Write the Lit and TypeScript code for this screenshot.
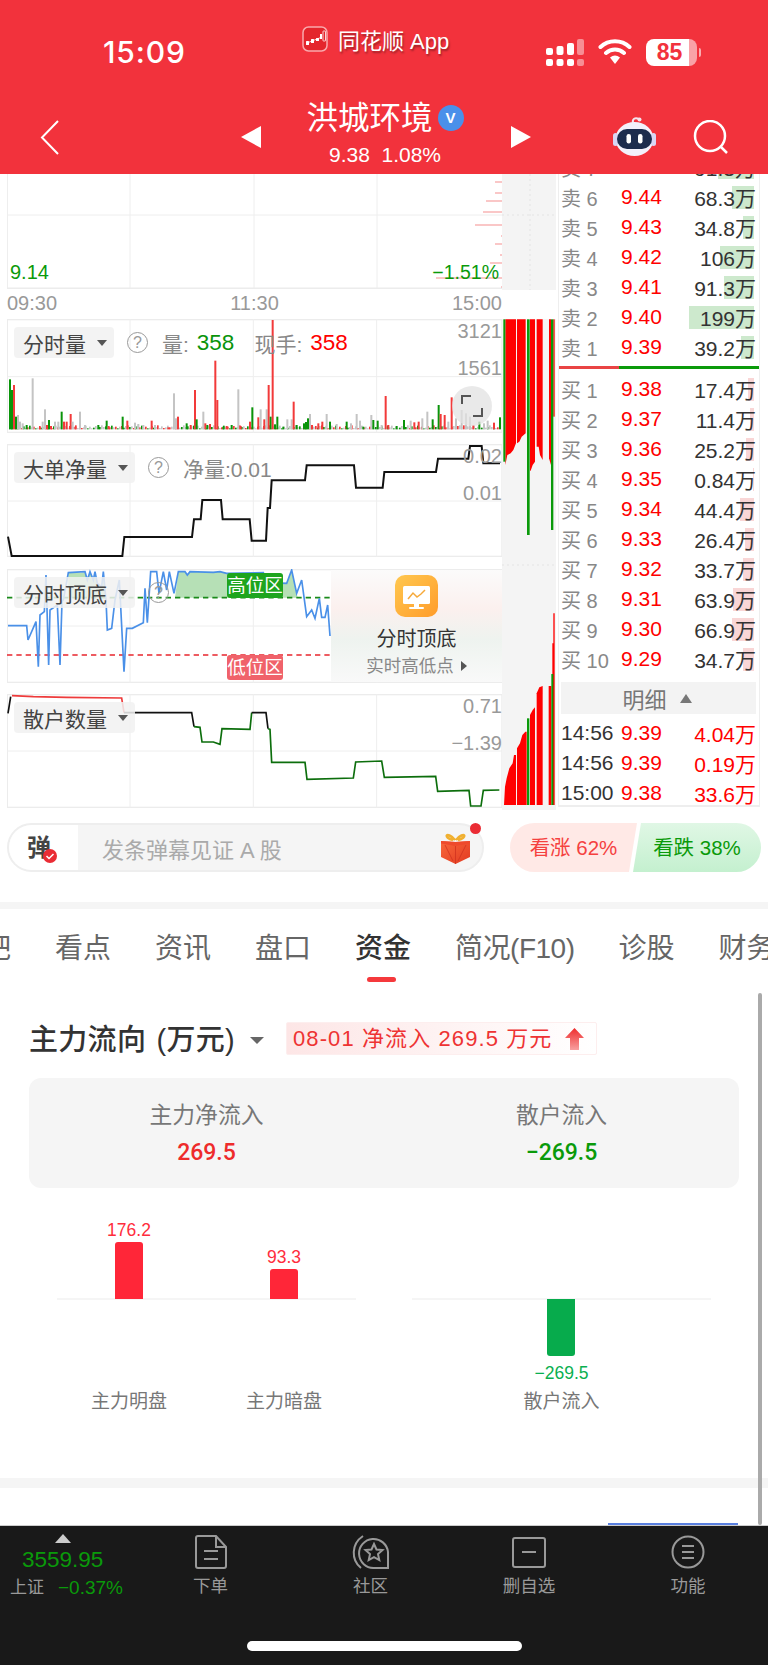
import { LitElement, html, css, svg } from "lit";
import { customElement } from "lit/decorators.js";

type Bar = [number, number, string];
const r = "#f23a3a", g = "#0a940a", y = "#c4c4c4";
const volBars: Bar[] = [
  [30,268,g],[36,300,g],[42,285,r],[48,380,g],[54,375,y],[60,395,y],[68,400,y],[80,405,g],[98,265,y],[120,412,r],[128,395,y],[135,358,y],[141,405,r],[147,390,g],[153,408,r],[165,395,y],[175,395,y],[185,365,g],[192,395,r],[200,395,r],[212,372,r],[218,395,y],[226,410,r],[240,365,y],[255,405,y],[295,405,g],[320,392,g],[326,408,r],[368,380,g],[382,392,r],[405,398,y],[415,402,y],[430,405,y],[455,392,r],[465,405,y],[505,412,r],[522,310,y],[528,385,y],[534,380,r],[560,400,g],[572,405,r],[585,300,r],[590,388,g],[610,365,y],[616,400,r],[622,405,g],[630,402,r],[646,212,r],[652,330,r],[670,410,g],[680,408,r],[695,405,g],[715,298,y],[722,408,r],[750,395,r],[757,352,g],[775,382,r],[782,358,y],[793,388,r],[800,358,y],[806,285,r],[812,380,g],[818,90,r],[825,403,g],[832,380,g],[850,410,g],[862,388,y],[875,388,y],[881,335,r],[890,405,g],[912,400,g],[918,396,g],[924,385,g],[930,372,y],[936,405,r],[955,400,r],[967,395,r],[980,372,y],[990,395,g],[1010,402,y],[1040,395,g],[1053,400,y],[1070,372,y],[1080,392,y],[1090,410,g],[1114,375,y],[1120,390,g],[1133,392,g],[1145,405,y],[1157,318,r],[1165,405,r],[1190,408,g],[1212,390,g],[1232,392,y],[1243,397,r],[1256,395,r],[1267,385,y],[1282,365,y],[1298,388,g],[1316,345,g],[1322,372,r],[1334,375,r],[1345,395,y],[1355,322,r],[1368,385,y],[1385,360,y],[1398,370,y],[1410,380,y],[1420,405,r],[1438,395,g],[1452,400,y],[1463,392,y],[1482,398,r],[1500,382,g],
];
const filler: Bar[] = Array.from({ length: 245 }, (_, i) => {
  const s = (i * 7919) % 97;
  return [27 + i * 6, 418 - (3 + (s % 10)), [y, r, g, y][s % 4]] as Bar;
});

const bigLine = "24,740 35,798 367,798 373,741 576,741 582,688 602,688 607,630 663,630 668,688 749,688 755,752 798,752 803,654 810,654 815,571 915,571 920,526 1062,526 1068,593 1148,593 1153,546 1308,546 1314,506 1405,506 1410,468 1445,468 1450,520 1500,520";
const blueLine = "24,197 80,197 84,240 108,185 115,320 120,165 133,155 138,45 146,315 150,150 172,135 180,315 186,125 190,120 205,38 255,35 262,60 270,35 280,60 285,35 292,70 305,80 310,35 318,120 322,210 335,205 345,120 358,60 372,335 380,205 397,205 430,188 435,85 442,188 452,35 470,35 477,100 490,35 500,90 508,35 522,100 535,35 555,35 562,45 570,35 640,37 660,35 680,40 790,38 795,68 860,70 875,30 890,100 905,60 920,170 935,150 945,175 958,115 965,172 975,172 983,135 990,228";

const asks = [["卖 6","9.44","68.3万",22],["卖 5","9.43","34.8万",11],["卖 4","9.42","106万",34],["卖 3","9.41","91.3万",30],["卖 2","9.40","199万",65],["卖 1","9.39","39.2万",13]] as const;
const bids = [["买 1","9.38","17.4万",6],["买 2","9.37","11.4万",4],["买 3","9.36","25.2万",8],["买 4","9.35","0.84万",1],["买 5","9.34","44.4万",14],["买 6","9.33","26.4万",9],["买 7","9.32","33.7万",11],["买 8","9.31","63.9万",21],["买 9","9.30","66.9万",22],["买 10","9.29","34.7万",11]] as const;
const trades = [["14:56","9.39","4.04万"],["14:56","9.39","0.19万"],["15:00","9.38","33.6万"]];

const gridLines = (top: number, bottom: number, mid: number) => svg`
  <rect x="22" y=${top + 2} width="1484" height=${bottom - top - 4} fill="none" stroke="#ececec" stroke-width="4"/>
  <line x1="21" x2="1506" y1=${mid} y2=${mid} stroke="#eeeeee" stroke-width="3"/>
  ${[390, 760, 1130].map((x) => svg`<line x1=${x} x2=${x} y1=${top} y2=${bottom} stroke="#eeeeee" stroke-width="3"/>`)}`;

@customElement("app-root")
export class AppRoot extends LitElement {
  static styles = css`
    :host { display: block; width: 768px; height: 1665px; overflow: hidden; position: relative; background: #fff; font-family: "Liberation Sans","Noto Sans CJK SC",sans-serif; color: #333; }
    svg { display: block; flex: none; }
    .hdr { background: #f2323c; height: 174px; color: #fff; position: relative; z-index: 2; }
    .status { height: 100px; display: flex; align-items: center; padding-left: 103px; }
    .time { font: 500 30px Inter, sans-serif; width: 84px; margin-top: 4px; letter-spacing: .9px; white-space: nowrap; }
    .brand { display: flex; align-items: center; margin-left: 115px; width: 244px; margin-bottom: 22px; }
    .brand span { font-size: 22px; margin-left: 10px; text-shadow: 1px 2px 2px rgba(0,0,0,.35); white-space: nowrap; }
    .sig { margin-top: 4px; }
    .wifi { margin-left: 14px; margin-top: 3px; }
    .batt { margin-left: 14px; margin-top: 4px; width: 55px; height: 27px; position: relative; display: flex; }
    .batt b { width: 43px; height: 27px; background: #fff; border-radius: 8px 0 0 8px; color: #f2323c; font: 700 23px "Liberation Sans", sans-serif; line-height: 27px; text-align: center; padding-left: 4px; box-sizing: border-box; }
    .batt i { width: 8px; height: 27px; background: rgba(255,255,255,.55); border-radius: 0 8px 8px 0; }
    .batt u { width: 2px; height: 9px; margin: 9px 0 0 2px; background: rgba(255,255,255,.6); border-radius: 0 2px 2px 0; }
    .nav { height: 74px; display: flex; align-items: center; padding-left: 40px; }
    .triL { margin-left: 182px; }
    .mid { width: 230px; margin-left: 9px; display: flex; flex-direction: column; align-items: center; margin-top: -6px; }
    .name { display: flex; align-items: center; gap: 5px; font-size: 31.5px; line-height: 36px; }
    .vb { width: 26px; height: 26px; border-radius: 50%; background: #4a90ea; color: #fff; font-size: 15px; font-weight: 700; line-height: 26px; text-align: center; }
    .sub { font-size: 21px; line-height: 26px; margin-top: 6px; white-space: pre; }
    .triR { margin-left: 11px; }
    .robot { margin-left: 82px; margin-top: -2px; }
    .search { margin-left: 37px; }

    .main { height: 636px; display: flex; overflow: hidden; }
    .left { width: 495px; margin-left: 7px; flex: none; }
    .panel { position: relative; height: 114px; margin-bottom: 11px; }
    .panel > svg { position: absolute; inset: 0; }
    .p0 { height: 115px; margin: 0; }
    .p2 { height: 113px; margin-bottom: 12px; }
    .last { margin-bottom: 0; }
    .val { position: absolute; top: 88px; font-size: 20px; line-height: 20px; color: #0a9a0a; }
    .v1 { left: 3px; }
    .v2 { right: 3px; font-size: 19.5px; }
    .times { height: 30px; display: flex; justify-content: space-between; font-size: 20px; line-height: 28px; color: #999; }
    .ov { position: absolute; left: 7px; top: 8px; display: flex; align-items: center; height: 31px; font-size: 21px; color: #888; white-space: nowrap; }
    .pill { height: 31px; display: flex; align-items: center; gap: 11px; padding: 0 7px 0 9px; background: rgba(241,241,241,.85); border-radius: 4px; color: #444; }
    .tri { width: 0; height: 0; border-left: 5.5px solid transparent; border-right: 5.5px solid transparent; border-top: 6.5px solid #555; }
    .q { width: 19px; height: 19px; border: 1.5px solid #999; border-radius: 50%; font-size: 16px; line-height: 19px; text-align: center; color: #999; margin: 0 14px 0 13px; }
    .num { font-size: 22.5px; margin-left: 8px; }
    .grn { color: #0a940a; }
    .red { color: #f00; }
    .hand { margin-left: 20px; }
    .rl { position: absolute; right: 0; font-size: 20px; line-height: 20px; color: #999; }
    .rl1 { top: 1.5px; }
    .rl2 { top: 38.5px; }
    .full { position: absolute; left: 445px; top: 67px; width: 40px; height: 40px; border-radius: 50%; background: rgba(225,225,225,.75); display: flex; align-items: center; justify-content: center; }
    .zone { position: absolute; left: 220px; width: 56px; height: 25px; border-radius: 3px; color: #fff; font-size: 18.5px; line-height: 25px; text-align: center; }
    .hi { top: 4px; background: #1ea51e; }
    .lo { top: 86px; background: #f0626a; }
    .promo { position: absolute; right: 0; top: 1px; width: 171px; height: 112px; background: linear-gradient(#fbfbfb 0, #fbf0ee 35%, #eef3ef 62%, #f9f9f9 100%); display: flex; flex-direction: column; align-items: center; }
    .picon { margin-top: 5px; }
    .pt { font-size: 20px; line-height: 24px; margin-top: 10px; color: #333; }
    .ps { font-size: 17.5px; line-height: 22px; margin-top: 4px; color: #888; display: flex; align-items: center; gap: 7px; }
    .ps i { width: 0; height: 0; border-top: 5px solid transparent; border-bottom: 5px solid transparent; border-left: 6px solid #555; }

    .col { width: 54px; flex: none; background: #f4f4f4; }
    .ob { width: 202px; margin-left: 2px; flex: none; border-left: 1px solid #eee; border-right: 1px solid #eee; box-sizing: border-box; height: 633px; border-bottom: 2px solid #eee; overflow: hidden; }
    .book { margin-top: -22px; padding: 0 3px 0 2px; }
    .row { height: 30px; display: grid; grid-template-columns: 60px 60px 1fr; align-items: center; position: relative; font-size: 21px; }
    .row .l { font-size: 20px; color: #888; white-space: pre; }
    .row .p { color: #f00; }
    .row .v { text-align: right; color: #333; position: relative; }
    .fill { position: absolute; right: 2px; top: 3.5px; height: 23px; }
    .gf { background: #cde9cd; }
    .rf { background: #f9d6d6; }
    .sep { height: 3px; margin: 4px -3px 5px -2px; background: linear-gradient(90deg, #e94444 60px, #0a9a0a 60px); }
    .more { height: 32px; margin: 8px 0 4px; background: #f3f3f3; display: flex; align-items: center; justify-content: center; gap: 13px; font-size: 22px; color: #777; padding-right: 3px; }
    .more i { width: 0; height: 0; border-left: 6.5px solid transparent; border-right: 6.5px solid transparent; border-bottom: 9px solid #777; }
    .row .t { color: #333; }
    .row .rv { color: #f00; text-align: right; }

    .cm { display: flex; margin: 13px 0 30px 7px; height: 49px; }
    .inp { width: 477px; height: 49px; box-sizing: border-box; border: 2px solid #eee; border-radius: 25px; background: #f5f5f5; position: relative; display: flex; align-items: center; font-size: 22px; color: #aaa; }
    .dan { width: 69px; height: 45px; background: #fff; border-radius: 23px 0 0 23px; margin-right: 24px; font-size: 24px; font-weight: 700; color: #444; line-height: 45px; padding-left: 18px; box-sizing: border-box; position: relative; }
    .chk { position: absolute; left: 34px; top: 24px; }
    .gift { position: absolute; left: 431px; top: 8px; }
    .dot { position: absolute; left: 461px; top: -2px; width: 11px; height: 11px; border-radius: 50%; background: #ea2c34; }
    .vote { display: flex; margin-left: 26px; font-size: 20.5px; line-height: 49px; text-align: center; }
    .up { width: 127px; background: #ffe9e6; color: #f5413f; border-radius: 25px 0 0 25px; clip-path: polygon(0 0, 100% 0, 93.7% 100%, 0 100%); }
    .down { width: 128px; margin-left: -4px; background: linear-gradient(#e0f7e5, #c4f0cf); color: #0a9a0a; border-radius: 0 25px 25px 0; clip-path: polygon(6.25% 0, 100% 0, 100% 100%, 0 100%); }
    .band { height: 7px; background: #f5f5f5; }
    .tabs { display: flex; gap: 44px; margin: 20px 0 0 -17px; height: 56px; font-size: 28px; line-height: 40px; color: #666; white-space: nowrap; overflow: visible; }
    .tabs b { position: relative; color: #333; font-weight: 500; }
    .tabs b::after { content: ""; position: absolute; left: 12px; top: 48px; width: 29px; height: 5px; border-radius: 3px; background: #f5393c; }
    .tight { letter-spacing: -.5px; }
    .sec { margin-top: 35px; padding-left: 29px; }
    .ttl { display: flex; align-items: center; height: 40px; }
    .ttl h2 { margin: 0; font-size: 29px; font-weight: 500; line-height: 40px; color: #333; white-space: nowrap; width: 221px; word-spacing: 2px; letter-spacing: .3px; }
    .tt { border-left: 7px solid transparent; border-right: 7px solid transparent; border-top: 7px solid #666; width: 0; height: 0; }
    .tag { margin-left: 22px; width: 311px; height: 33px; box-sizing: border-box; margin-top: -3px; border: 1px solid #fdeeee; border-radius: 2px; background: linear-gradient(90deg, #fde6e6, #fff); color: #ee3333; font-size: 22px; letter-spacing: 1.1px; line-height: 31px; padding-left: 6px; display: flex; align-items: center; gap: 13px; white-space: nowrap; }
    .card { margin-top: 18px; width: 710px; height: 110px; background: #f5f5f5; border-radius: 12px; display: grid; grid-template-columns: 1fr 1fr; text-align: center; }
    .card div { padding-top: 22px; font-size: 22.8px; line-height: 30px; color: #777; }
    .card p { margin: 8px 0 0; font: 500 23px/30px Roboto, sans-serif; }
    .card .a { color: #ee2b2b; }
    .card .b { color: #0a9a0a; }
    .flow { display: flex; gap: 56px; margin: 21px 0 0 28px; }
    .grp { width: 299px; display: flex; gap: 11px; position: relative; }
    .grp::before { content: ""; position: absolute; left: 0; right: 0; top: 89px; height: 2px; background: #f5f5f5; }
    .it { flex: 1; position: relative; display: flex; flex-direction: column; align-items: center; }
    .ua { height: 90px; display: flex; flex-direction: column; justify-content: flex-end; align-items: center; }
    .da { height: 91px; display: flex; flex-direction: column; align-items: center; }
    .bar { width: 28px; }
    .bu { background: #ff2638; border-radius: 3px 3px 0 0; }
    .bd { background: #07ab4c; border-radius: 0 0 3px 3px; }
    .n { font-size: 17.5px; line-height: 20px; color: #ff2d3c; margin-bottom: 2px; }
    .ng { color: #0aaf50; margin: 7px 0 0; }
    .lb { font-size: 19px; line-height: 24px; color: #777; }
    .band2 { height: 10px; margin-top: 64px; background: #f5f5f5; }
    .blue { width: 130px; height: 2px; margin: 35px 0 0 608px; background: #5a80e0; }
    .foot { height: 140px; background: #191919; border-top: 1px solid #ccc; box-sizing: border-box; display: grid; grid-template-columns: 130px 161px 159px 158px 160px; position: relative; color: #999; }
    .idx { padding-left: 10px; }
    .idx i { display: block; width: 0; height: 0; margin: 8px 0 0 45px; border-left: 8px solid transparent; border-right: 8px solid transparent; border-bottom: 9px solid #ccc; }
    .idx p { margin: 4px 0 0 12px; font-size: 22.5px; line-height: 26px; color: #0a9a0a; }
    .idx div { display: flex; align-items: center; gap: 14px; font-size: 17px; line-height: 24px; margin-top: 3px; }
    .idx span { font-size: 19px; color: #0a9a0a; }
    .cell { display: flex; flex-direction: column; align-items: center; padding-top: 9px; font-size: 17.5px; line-height: 24px; gap: 5px; }
    .home { position: absolute; left: 247px; top: 115px; width: 275px; height: 10px; background: #fff; border-radius: 5px; }
    .scroll { position: absolute; left: 758px; top: 993px; width: 4px; height: 532px; background: #aaa; border-radius: 2px; }
  `;

  private help() { return html`<span class="q">?</span>`; }

  private header() {
    return html`<div class="hdr">
      <div class="status">
        <div class="time">15:09</div>
        <div class="brand">
          <svg width="26" height="26" viewBox="0 0 26 26"><rect x="1" y="1" width="24" height="24" rx="5.500" fill="#e4252c" stroke="#f9a9ac" stroke-width="1.500"/><path d="M5 17l5-2 5-2 5-2" fill="none" stroke="#fff" stroke-width=".8"/><rect x="4" y="15" width="3" height="4" rx=".5" fill="#fff"/><rect x="9" y="13" width="3" height="4" rx=".5" fill="#fff"/><rect x="14" y="12" width="3" height="3" rx=".5" fill="#fff"/><rect x="18" y="8" width="2" height="5" fill="#fff"/><rect x="21" y="5" width="2.500" height="10" rx=".5" fill="none" stroke="#fff" stroke-width=".8"/></svg>
          <span>同花顺 App</span>
        </div>
        <svg class="sig" width="38" height="27" viewBox="0 0 38 27"><g fill="#fff"><rect x="0" y="9" width="7" height="7" rx="2"/><rect x="10.500" y="7" width="7" height="9" rx="2"/><rect x="21" y="4" width="7" height="12" rx="2"/><rect x="0" y="20" width="7" height="7" rx="2"/><rect x="10.500" y="20" width="7" height="7" rx="2"/><rect x="21" y="20" width="7" height="7" rx="2"/></g><g fill="#fff" opacity=".45"><rect x="31" y="0" width="7" height="16" rx="2"/><rect x="31" y="20" width="7" height="7" rx="2"/></g></svg>
        <svg class="wifi" width="34" height="25" viewBox="0 0 34 25"><path d="M17 25l-5-6.500a8 8 0 0 1 10 0z" fill="#fff"/><path d="M8 14a13.500 13.500 0 0 1 18 0M2.500 8a21 21 0 0 1 29 0" fill="none" stroke="#fff" stroke-width="4" stroke-linecap="round"/></svg>
        <div class="batt"><b>85</b><i></i><u></u></div>
      </div>
      <div class="nav">
        <svg width="19" height="35" viewBox="0 0 19 35"><path d="M18 1L2 17.500 18 34" fill="none" stroke="#fff" stroke-width="2"/></svg>
        <svg class="triL" width="20" height="22" viewBox="0 0 20 22"><path d="M20 0v22L0 11z" fill="#fff"/></svg>
        <div class="mid">
          <div class="name"><span>洪城环境</span><span class="vb">V</span></div>
          <div class="sub">9.38  1.08%</div>
        </div>
        <svg class="triR" width="20" height="22" viewBox="0 0 20 22"><path d="M0 0v22l20-11z" fill="#fff"/></svg>
        <svg class="robot" width="43" height="40" viewBox="0 0 43 40"><path d="M20 7c-1-4 2-6 6-4" fill="none" stroke="#f4e4ee" stroke-width="2"/><circle cx="26.500" cy="3.500" r="2" fill="#f4e4ee"/><ellipse cx="21.500" cy="23" rx="19" ry="17" fill="#f3f1fb"/><rect x="0" y="17" width="5" height="13" rx="2.500" fill="#d9d6f4"/><rect x="38" y="17" width="5" height="13" rx="2.500" fill="#d9d6f4"/><rect x="4" y="13" width="35" height="20" rx="10" fill="#1d2c4d"/><rect x="13.500" y="18" width="4.500" height="9.500" rx="2.200" fill="#fff"/><rect x="25" y="18" width="4.500" height="9.500" rx="2.200" fill="#fff"/></svg>
        <svg class="search" width="35" height="34" viewBox="0 0 35 34"><circle cx="17" cy="16" r="15" fill="none" stroke="#fff" stroke-width="2.500"/><path d="M28 27l6 6" stroke="#fff" stroke-width="2.500"/></svg>
      </div>
    </div>`;
  }

  private charts() {
    const pink = [[495,182],[495,193],[486,201],[483,212],[475,225],[501,236],[495,244],[500,255],[490,263],[436,278],[501,287]];
    return html`<div class="left">
      <div class="panel p0">
        <svg width="495" height="115" viewBox="7 174 495 115">
          <g stroke="#eee" stroke-width="1"><line x1="130" x2="130" y1="174" y2="289"/><line x1="254" x2="254" y1="174" y2="289"/><line x1="377" x2="377" y1="174" y2="289"/><line x1="7" x2="502" y1="215" y2="215"/><line x1="7.500" x2="7.500" y1="174" y2="289"/></g>
          <rect x="7" y="287.500" width="495" height="2" fill="#ececec"/>
          ${pink.map(([x, yy]) => svg`<line x1=${x} x2="502" y1=${yy} y2=${yy} stroke="#f9b4b4" stroke-width="1.500"/>`)}
        </svg>
        <span class="val v1">9.14</span><span class="val v2">−1.51%</span>
      </div>
      <div class="times"><span>09:30</span><span>11:30</span><span>15:00</span></div>

      <div class="panel">
        <svg width="495" height="114" viewBox="21 87 1485 342">
          ${gridLines(87, 429, 260)}
          ${filler.map(([x, t, c]) => svg`<rect x=${x} y=${t} width="5" height=${418 - t} fill=${c}/>`)}
          ${volBars.map(([x, t, c]) => svg`<rect x=${x - 3} y=${t} width="6" height=${418 - t} fill=${c}/>`)}
        </svg>
        <div class="ov"><div class="pill">分时量<i class="tri"></i></div>${this.help()}<span>量:</span><span class="num grn">358</span><span class="hand">现手:</span><span class="num red">358</span></div>
        <span class="rl rl1">3121</span><span class="rl rl2">1561</span>
        <div class="full"><svg width="22" height="22" viewBox="0 0 22 22"><path d="M1 9V1h9M21 13v8h-9" fill="none" stroke="#555" stroke-width="2"/></svg></div>
      </div>

      <div class="panel p2">
        <svg width="495" height="113" viewBox="21 462 1485 339">
          ${gridLines(462, 801, 633)}
          <polyline points=${bigLine} fill="none" stroke="#111" stroke-width="6"/>
        </svg>
        <div class="ov"><div class="pill">大单净量<i class="tri"></i></div>${this.help()}<span>净量:0.01</span></div>
        <span class="rl rl1">0.02</span><span class="rl rl2">0.01</span>
      </div>

      <div class="panel">
        <svg width="495" height="114" viewBox="21 27 1485 342">
          ${gridLines(27, 369, 198)}
          <path d="M205 113V38H255L262 60 270 35 280 60 285 35 292 70 305 80 310 35 318 113zM525 113L535 35H555L562 45 570 35H640L660 35 680 40H790L795 68H860L875 30 890 100 893 113z" fill="#b6e0b6"/>
          <line x1="21" x2="993" y1="113" y2="113" stroke="#1a8a1a" stroke-width="5" stroke-dasharray="16 12"/>
          <line x1="21" x2="993" y1="285" y2="285" stroke="#e8262e" stroke-width="5" stroke-dasharray="16 12"/>
          <polyline points=${blueLine} fill="none" stroke="#4a90e8" stroke-width="5"/>
        </svg>
        <div class="zone hi">高位区</div><div class="zone lo">低位区</div>
        <div class="ov"><div class="pill">分时顶底<i class="tri"></i></div>${this.help()}</div>
        <div class="promo">
          <svg class="picon" width="43" height="42" viewBox="0 0 43 42"><defs><linearGradient id="po" x1="0" y1="0" x2="1" y2="1"><stop offset="0" stop-color="#ffc850"/><stop offset="1" stop-color="#ff9c2a"/></linearGradient></defs><rect width="43" height="42" rx="10" fill="url(#po)"/><rect x="8" y="11" width="27" height="18" rx="1.500" fill="#fff"/><path d="M13 24l5-6 4 4 4-3 4-4" fill="none" stroke="#f6a93a" stroke-width="1.500"/><rect x="19" y="29" width="5" height="3" fill="#fff"/><rect x="14" y="32" width="15" height="2" rx="1" fill="#fff"/></svg>
          <div class="pt">分时顶底</div>
          <div class="ps">实时高低点<i></i></div>
        </div>
      </div>

      <div class="panel last">
        <svg width="495" height="114" viewBox="21 402 1485 342">
          ${gridLines(402, 744, 573)}
          <polyline points="24,460 32,410" fill="none" stroke="#111" stroke-width="5"/>
          <polyline points="36,407 100,410 200,412 365,414 372,458" fill="none" stroke="#ee3b3b" stroke-width="5"/>
          <polyline points="372,458 575,458 582,500" fill="none" stroke="#111" stroke-width="5"/>
          <polyline points="582,500 600,502 606,546 640,546 660,553 666,506 750,508 755,458" fill="none" stroke="#0c6e0c" stroke-width="5"/>
          <polyline points="755,458 798,458 804,506" fill="none" stroke="#111" stroke-width="5"/>
          <polyline points="804,506 810,508 815,607 915,607 921,658 1060,654 1067,606 1145,603 1153,652 1307,649 1313,694 1407,691 1412,738 1443,738 1450,691 1498,690" fill="none" stroke="#0c6e0c" stroke-width="5"/>
        </svg>
        <div class="ov"><div class="pill">散户数量<i class="tri"></i></div></div>
        <span class="rl rl1">0.71</span><span class="rl rl2">−1.39</span>
      </div>
    </div>`;
  }

  private profile() {
    const R = "#ff0000", G = "#0a9a0a";
    return html`<div class="col">
      <svg width="54" height="636" viewBox="0 0 54 636">
        <rect x="0" y="116" width="54" height="29" fill="#fff"/>
        <line x1="28" x2="28" y1="0" y2="116" stroke="#e4e4e4" stroke-dasharray="2 3"/>
        <line x1="0" x2="54" y1="41" y2="41" stroke="#e4e4e4" stroke-dasharray="2 3"/>
        <line x1="0" x2="54" y1="391" y2="391" stroke="#e4e4e4" stroke-dasharray="2 3"/>
        <g transform="translate(-12,-14) scale(.33333)">
          <g fill=${R}>
            <polygon points="46,478 78,478 78,850 70,870 62,880 52,885 46,915"/>
            <polygon points="81,478 107,478 107,820 95,830 88,845 81,850"/>
            <polygon points="120,478 135,478 135,905 128,915 122,932 120,932"/>
            <polygon points="140,478 158,478 158,900 150,885 146,860 140,860"/>
            <polygon points="177,478 183,478 183,915 177,895"/>
            <rect x="190" y="478" width="4" height="292"/>
          </g>
          <g fill=${G}>
            <rect x="40" y="478" width="6" height="427"/>
            <rect x="111" y="478" width="8" height="647"/>
            <rect x="183" y="478" width="7" height="632"/>
          </g>
        </g>
        <g transform="translate(-12,306) scale(.33333)">
          <g fill=${R}>
            <polygon points="42,975 45,920 50,895 58,865 68,850 72,825 78,825 78,975"/>
            <polygon points="81,975 81,805 90,790 97,765 106,755 110,755 110,975"/>
            <polygon points="120,975 120,705 128,690 135,682 135,975"/>
            <polygon points="140,975 140,640 148,622 158,618 158,975"/>
            <polygon points="176,975 176,618 184,618 184,975"/>
            <polygon points="187,975 187,490 190,490 190,400 194,400 194,975"/>
          </g>
          <g fill=${G}>
            <rect x="111" y="715" width="7" height="260"/>
            <rect x="184" y="582" width="6" height="393"/>
          </g>
        </g>
      </svg>
    </div>`;
  }

  private book() {
    const line = (a: readonly [string, string, string, number], cls: string) => html`<div class="row">
      <span class="fill ${cls}" style="width:${a[3]}px"></span>
      <span class="l">${a[0]}</span><span class="p">${a[1]}</span><span class="v">${a[2]}</span>
    </div>`;
    return html`<div class="ob"><div class="book">
      ${line(["卖 7", "9.45", "91.3万", 36], "gf")}
      ${asks.map((a) => line(a, "gf"))}
      <div class="sep"></div>
      ${bids.map((b) => line(b, "rf"))}
      <div class="more">明细<i></i></div>
      ${trades.map((t) => html`<div class="row"><span class="t">${t[0]}</span><span class="p">${t[1]}</span><span class="rv">${t[2]}</span></div>`)}
    </div></div>`;
  }

  private comment() {
    return html`<div class="cm">
      <div class="inp">
        <div class="dan">弹<svg class="chk" width="14" height="14" viewBox="0 0 14 14"><circle cx="7" cy="7" r="7" fill="#ea2c34"/><path d="M3.500 7l2.500 2.500 4.500-4.500" fill="none" stroke="#fff" stroke-width="1.500"/></svg></div>
        发条弹幕见证 A 股
        <svg class="gift" width="31" height="31" viewBox="0 0 31 31"><defs><linearGradient id="gb" x1="0" y1="0" x2="1" y2="1"><stop offset="0" stop-color="#f8683a"/><stop offset="1" stop-color="#e23a22"/></linearGradient></defs><path d="M15 7C6 -3 3 5 13 7M16 7C25 -3 28 5 18 7" fill="none" stroke="#f0b030" stroke-width="2.500"/><path d="M1 8l14.500 1L30 8v16l-14.500 7L1 24z" fill="url(#gb)"/><path d="M1 8l14.500 1L30 8v2.500L15.500 13 1 10.500z" fill="#ee4a2c"/><path d="M15.500 13v18M5 12l8 16M26 12l-8 16" stroke="#d03220" stroke-width=".8"/></svg>
        <span class="dot"></span>
      </div>
      <div class="vote"><div class="up">看涨 62%</div><div class="down">看跌 38%</div></div>
    </div>`;
  }

  private flow() {
    return html`<div class="flow">
      <div class="grp">
        <div class="it"><div class="ua"><span class="n">176.2</span><div class="bar bu" style="height:57px"></div></div><div class="da"></div><span class="lb">主力明盘</span></div>
        <div class="it"><div class="ua"><span class="n">93.3</span><div class="bar bu" style="height:30px"></div></div><div class="da"></div><span class="lb">主力暗盘</span></div>
      </div>
      <div class="grp">
        <div class="it"><div class="ua"></div><div class="da"><div class="bar bd" style="height:57px"></div><span class="n ng">−269.5</span></div><span class="lb">散户流入</span></div>
      </div>
    </div>`;
  }

  private footer() {
    const s = "#999";
    return html`<div class="foot">
      <div class="idx"><i></i><p>3559.95</p><div>上证<span>−0.37%</span></div></div>
      <div class="cell"><svg width="32" height="34" viewBox="0 0 32 34" fill="none" stroke=${s} stroke-width="2"><path d="M3 1h18l10 11v19a2 2 0 0 1-2 2H3a2 2 0 0 1-2-2V3a2 2 0 0 1 2-2zM21 1v11h10M9 16h14M9 24h14"/></svg>下单</div>
      <div class="cell"><svg width="38" height="34" viewBox="0 0 38 34" fill="none" stroke=${s} stroke-width="2"><path d="M11 1C-1 9-1 25 9 33"/><path d="M36 33H22A14.500 14.500 0 1 1 36 17z"/><path d="M22 9l2.500 5.500 6 .6-4.500 4 1.300 6-5.300-3-5.300 3 1.300-6-4.500-4 6-.6z"/></svg>社区</div>
      <div class="cell"><svg width="34" height="34" viewBox="0 0 34 34" fill="none" stroke=${s} stroke-width="2"><rect x="1" y="3" width="32" height="29" rx="2"/><path d="M10 17h14"/></svg>删自选</div>
      <div class="cell"><svg width="34" height="34" viewBox="0 0 34 34" fill="none" stroke=${s} stroke-width="2"><circle cx="17" cy="17" r="15.500"/><path d="M11 11h12M11 17h12M11 23h12"/></svg>功能</div>
      <div class="home"></div>
    </div>`;
  }

  render() {
    return html`
      ${this.header()}
      <div class="main">${this.charts()}${this.profile()}${this.book()}</div>
      ${this.comment()}
      <div class="band"></div>
      <div class="tabs"><span>吧</span><span>看点</span><span>资讯</span><span>盘口</span><b>资金</b><span class="tight">简况(F10)</span><span>诊股</span><span>财务</span></div>
      <div class="sec">
        <div class="ttl"><h2>主力流向 (万元)</h2><i class="tt"></i>
          <div class="tag">08-01 净流入 269.5 万元
            <svg width="19" height="22" viewBox="0 0 19 22"><defs><linearGradient id="ar" x1="0" y1="0" x2="0" y2="1"><stop offset="0" stop-color="#ee2b2b"/><stop offset="1" stop-color="#f8a0a0"/></linearGradient></defs><path d="M9.500 0L19 10h-5v12H5V10H0z" fill="url(#ar)"/></svg>
          </div>
        </div>
        <div class="card">
          <div>主力净流入<p class="a">269.5</p></div>
          <div>散户流入<p class="b">−269.5</p></div>
        </div>
        ${this.flow()}
      </div>
      <div class="band2"></div>
      <div class="blue"></div>
      ${this.footer()}
      <div class="scroll"></div>
    `;
  }
}
